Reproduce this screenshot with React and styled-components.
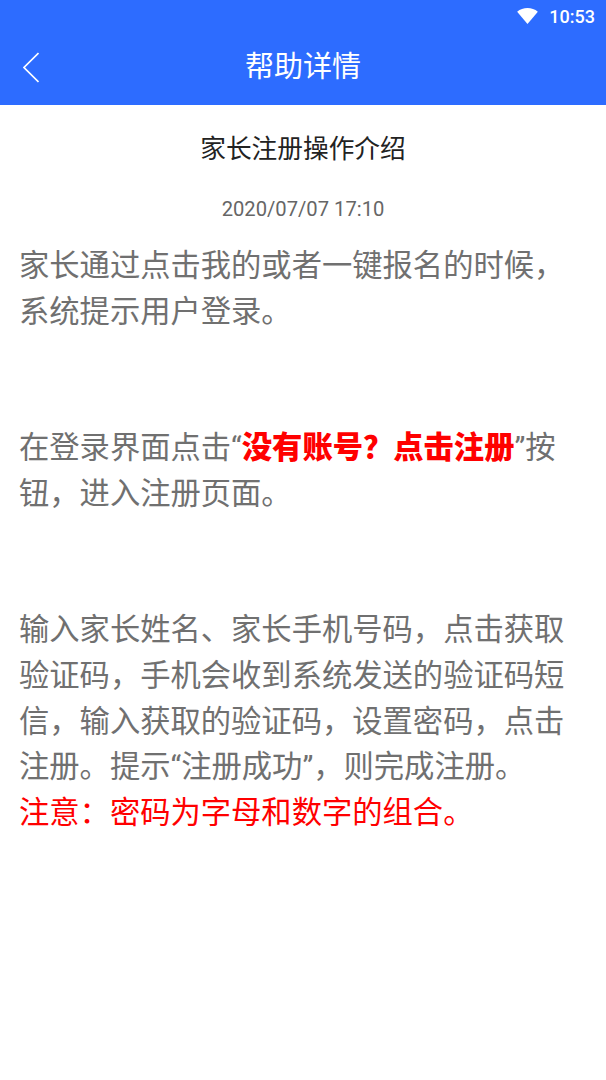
import React from "react";
import styled, { createGlobalStyle } from "styled-components";

const Global = createGlobalStyle`
  html, body { margin: 0; padding: 0; background: #fff; }
  body { font-family: "Roboto", "Noto Sans CJK SC", sans-serif; }
`;
const Page = styled.div`width: 606px; height: 1080px; background: #fff; overflow: hidden;`;
const Header = styled.header`background: #2d6cff; height: 105px; display: flex; flex-direction: column; color: #fff;`;
const StatusBar = styled.div`height: 33px; display: flex; align-items: center; justify-content: flex-end; gap: 11px; padding-right: 11px; font-size: 18px; font-weight: 500;`;
const WifiIcon = styled.svg`margin-top: -2px;`;
const NavBar = styled.div`flex: 1; display: flex; align-items: center; position: relative; padding-left: 23px; padding-bottom: 3px;`;
const NavTitle = styled.div`position: absolute; left: 0; right: 0; top: 14px; text-align: center; font: 29px/1.2 "Noto Sans CJK SC", sans-serif;`;
const Title = styled.h1`margin: 24px 0 0; text-align: center; font: 400 25.7px/36px "Noto Sans CJK SC", sans-serif; color: #222;`;
const Date = styled.div`margin-top: 31px; text-align: center; font: 20.2px/26px "Roboto", sans-serif; color: #666;`;
const Body = styled.div`padding: 21px 20px 0 19px; font: 30.3px/45.6px "Roboto", "Noto Sans CJK SC", sans-serif; color: #707070;`;
const Para = styled.p`margin: 0 0 91px;`;
const Strong = styled.strong`color: #f00; font-weight: 900;`;
const Red = styled.span`color: #f00;`;

export default function App() {
  return (
    <Page>
      <Global />
      <Header>
        <StatusBar>
          <WifiIcon width="21" height="16" viewBox="0 0 22 17"><path d="M0 4C3 1.300 7 0 11 0s8 1.300 11 4L11 17z" fill="#fff" /></WifiIcon>
          <span>10:53</span>
        </StatusBar>
        <NavBar>
          <svg width="16" height="31" viewBox="0 0 16 31"><path d="M15.500 1 1 15.500 15.500 30" fill="none" stroke="#fff" strokeWidth="1.700" /></svg>
          <NavTitle>帮助详情</NavTitle>
        </NavBar>
      </Header>
      <Title>家长注册操作介绍</Title>
      <Date>2020/07/07 17:10</Date>
      <Body>
        <Para>家长通过点击我的或者一键报名的时候，系统提示用户登录。</Para>
        <Para>在登录界面点击“<Strong>没有账号？点击注册</Strong>”按钮，进入注册页面。</Para>
        <Para>输入家长姓名、家长手机号码，点击获取验证码，手机会收到系统发送的验证码短信，输入获取的验证码，设置密码，点击注册。提示“注册成功”，则完成注册。<br /><Red>注意：密码为字母和数字的组合。</Red></Para>
      </Body>
    </Page>
  );
}
